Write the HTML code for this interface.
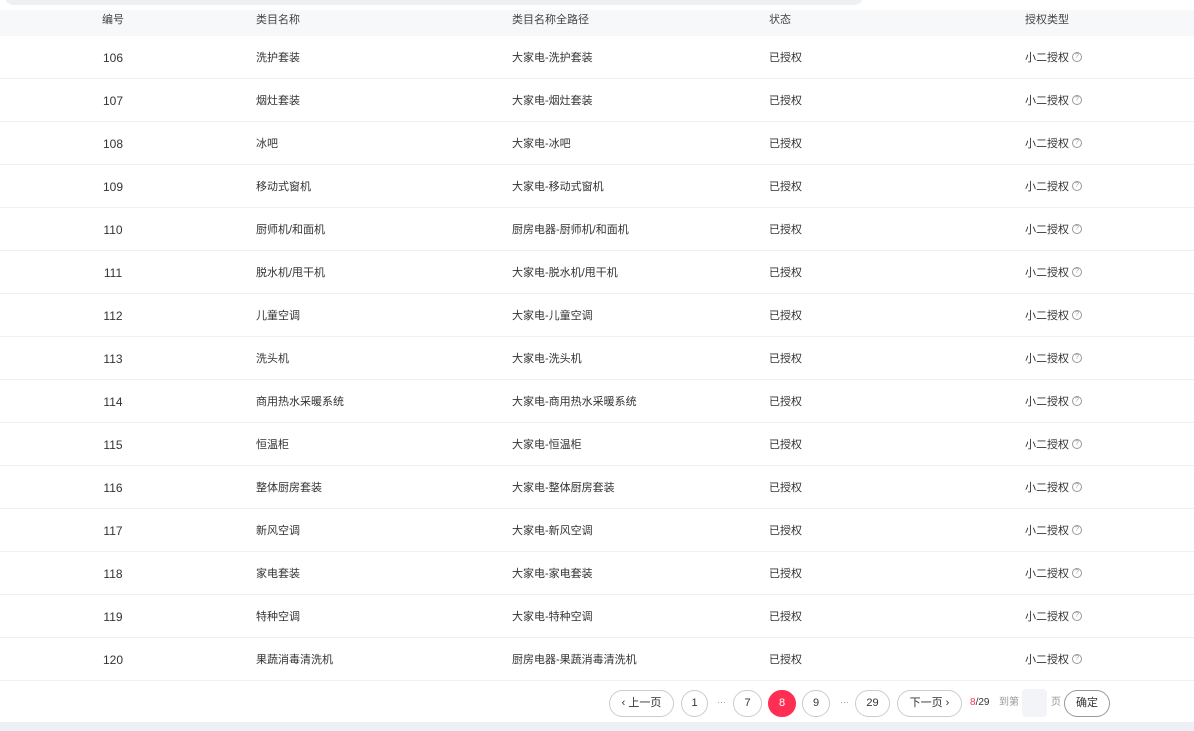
<!DOCTYPE html>
<html><head><meta charset="utf-8"><style>
*{margin:0;padding:0;box-sizing:border-box}
body{width:1194px;height:731px;background:#fff;font-family:"Liberation Sans","Noto Sans CJK SC",sans-serif;font-size:11px;color:#333;position:relative;overflow:hidden}
.topbar{position:absolute;left:4px;top:-10px;width:860px;height:15px;background:#eff0f3;border-radius:0 0 10px 10px}
.hdr{position:absolute;left:0;top:10px;width:1194px;height:26px;background:#f7f8fa;color:#444}
.row{position:absolute;left:0;width:1194px;height:43px;border-bottom:1px solid #eeeff2}
.c{position:absolute;top:1px;line-height:43px;white-space:nowrap}
.hdr .c{line-height:20px;top:0}
.n{left:83px;width:60px;text-align:center;font-size:12px}
.a{left:256px}.b{left:512px}.s{left:769px}.t{left:1025px}
.q{display:inline-block;width:10px;height:10px;border:1px solid #999;border-radius:50%;font-size:7px;line-height:8px;text-align:center;color:#999;vertical-align:middle;margin-left:3px;margin-top:-2px}
.pg{position:absolute;top:690px;height:27px;border:1px solid #ccc;border-radius:14px;line-height:25px;text-align:center;font-size:11px;color:#333;background:#fff}
.dots{position:absolute;top:690px;line-height:25px;color:#999;font-size:9px}
.bottom{position:absolute;left:0;top:722px;width:1194px;height:9px;background:#eef0f5}
</style></head><body>
<div class="topbar"></div>
<div class="hdr"><span class="c n" style="font-size:11px">编号</span><span class="c a">类目名称</span><span class="c b">类目名称全路径</span><span class="c s">状态</span><span class="c t">授权类型</span></div>
<div class="row" style="top:36px"><span class="c n">106</span><span class="c a">洗护套装</span><span class="c b">大家电-洗护套装</span><span class="c s">已授权</span><span class="c t">小二授权<span class="q">?</span></span></div>
<div class="row" style="top:79px"><span class="c n">107</span><span class="c a">烟灶套装</span><span class="c b">大家电-烟灶套装</span><span class="c s">已授权</span><span class="c t">小二授权<span class="q">?</span></span></div>
<div class="row" style="top:122px"><span class="c n">108</span><span class="c a">冰吧</span><span class="c b">大家电-冰吧</span><span class="c s">已授权</span><span class="c t">小二授权<span class="q">?</span></span></div>
<div class="row" style="top:165px"><span class="c n">109</span><span class="c a">移动式窗机</span><span class="c b">大家电-移动式窗机</span><span class="c s">已授权</span><span class="c t">小二授权<span class="q">?</span></span></div>
<div class="row" style="top:208px"><span class="c n">110</span><span class="c a">厨师机/和面机</span><span class="c b">厨房电器-厨师机/和面机</span><span class="c s">已授权</span><span class="c t">小二授权<span class="q">?</span></span></div>
<div class="row" style="top:251px"><span class="c n">111</span><span class="c a">脱水机/甩干机</span><span class="c b">大家电-脱水机/甩干机</span><span class="c s">已授权</span><span class="c t">小二授权<span class="q">?</span></span></div>
<div class="row" style="top:294px"><span class="c n">112</span><span class="c a">儿童空调</span><span class="c b">大家电-儿童空调</span><span class="c s">已授权</span><span class="c t">小二授权<span class="q">?</span></span></div>
<div class="row" style="top:337px"><span class="c n">113</span><span class="c a">洗头机</span><span class="c b">大家电-洗头机</span><span class="c s">已授权</span><span class="c t">小二授权<span class="q">?</span></span></div>
<div class="row" style="top:380px"><span class="c n">114</span><span class="c a">商用热水采暖系统</span><span class="c b">大家电-商用热水采暖系统</span><span class="c s">已授权</span><span class="c t">小二授权<span class="q">?</span></span></div>
<div class="row" style="top:423px"><span class="c n">115</span><span class="c a">恒温柜</span><span class="c b">大家电-恒温柜</span><span class="c s">已授权</span><span class="c t">小二授权<span class="q">?</span></span></div>
<div class="row" style="top:466px"><span class="c n">116</span><span class="c a">整体厨房套装</span><span class="c b">大家电-整体厨房套装</span><span class="c s">已授权</span><span class="c t">小二授权<span class="q">?</span></span></div>
<div class="row" style="top:509px"><span class="c n">117</span><span class="c a">新风空调</span><span class="c b">大家电-新风空调</span><span class="c s">已授权</span><span class="c t">小二授权<span class="q">?</span></span></div>
<div class="row" style="top:552px"><span class="c n">118</span><span class="c a">家电套装</span><span class="c b">大家电-家电套装</span><span class="c s">已授权</span><span class="c t">小二授权<span class="q">?</span></span></div>
<div class="row" style="top:595px"><span class="c n">119</span><span class="c a">特种空调</span><span class="c b">大家电-特种空调</span><span class="c s">已授权</span><span class="c t">小二授权<span class="q">?</span></span></div>
<div class="row" style="top:638px"><span class="c n">120</span><span class="c a">果蔬消毒清洗机</span><span class="c b">厨房电器-果蔬消毒清洗机</span><span class="c s">已授权</span><span class="c t">小二授权<span class="q">?</span></span></div>

<div class="pg" style="left:609px;width:65px">‹ 上一页</div>
<div class="pg" style="left:681px;width:27px">1</div>
<div class="dots" style="left:717px">···</div>
<div class="pg" style="left:733px;width:29px">7</div>
<div class="pg" style="left:768px;width:28px;background:#ff2f54;border-color:#ff2f54;color:#fff">8</div>
<div class="pg" style="left:802px;width:28px">9</div>
<div class="dots" style="left:840px">···</div>
<div class="pg" style="left:855px;width:35px">29</div>
<div class="pg" style="left:897px;width:65px">下一页 ›</div>
<div style="position:absolute;left:970px;top:690px;line-height:25px;font-size:10px"><span style="color:#ff2f54">8</span>/29</div>
<div style="position:absolute;left:999px;top:690px;line-height:25px;font-size:10px;color:#999">到第</div>
<div style="position:absolute;left:1022px;top:689px;width:25px;height:28px;background:#f3f4f7;border-radius:4px"></div>
<div style="position:absolute;left:1051px;top:690px;line-height:25px;font-size:10px;color:#999">页</div>
<div class="pg" style="left:1064px;width:46px;border-color:#999">确定</div>
<div class="bottom"></div>
</body></html>
